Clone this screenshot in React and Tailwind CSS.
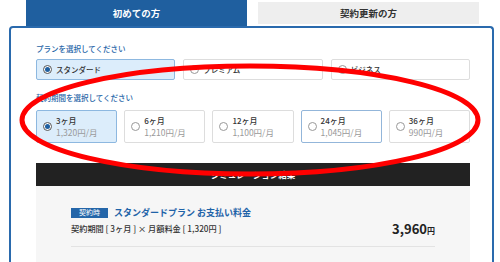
import React from "react";

function Radio({ checked }) {
  return (
    <span
      className={
        "flex h-[9px] w-[9px] shrink-0 items-center justify-center rounded-full border bg-white " +
        (checked ? "border-[#555]" : "border-[#999]")
      }
    >
      {checked && <span className="h-[5px] w-[5px] rounded-full bg-[#1f5fa0]" />}
    </span>
  );
}

const plans = [
  { name: "スタンダード", checked: true },
  { name: "プレミアム", checked: false },
  { name: "ビジネス", checked: false },
];

const periods = [
  { name: "3ヶ月", price: "1,320円/月", state: "checked" },
  { name: "6ヶ月", price: "1,210円/月", state: "" },
  { name: "12ヶ月", price: "1,100円/月", state: "" },
  { name: "24ヶ月", price: "1,045円/月", state: "hover" },
  { name: "36ヶ月", price: "990円/月", state: "" },
];

export default function App() {
  return (
    <div
      className="relative h-[262px] w-[500px] overflow-hidden bg-white text-[#333]"
      style={{ fontFamily: '"Noto Sans CJK JP", "Noto Sans", sans-serif' }}
    >
      {/* tabs */}
      <div className="flex h-[26px] pl-[26px]">
        <div className="flex h-[26px] w-[221px] items-center justify-center bg-[#1f5f9f] text-[9.5px] font-bold text-white">
          初めての方
        </div>
        <div className="ml-[11px] mt-[2px] flex h-[22px] w-[221px] items-center justify-center bg-[#eeeeee] text-[9.5px] font-bold text-[#333]">
          契約更新の方
        </div>
      </div>

      {/* panel */}
      <div className="ml-[9px] h-[300px] w-[485px] rounded-t-[4px] border-2 border-b-0 border-[#2a6aad] pt-[16px]">
        <div className="ml-[25px] w-[434px]">
          <div className="h-[10px] text-[7.5px] font-medium leading-[10px] text-[#2766a8]">
            プランを選択してください
          </div>
          <div className="mt-[5px] grid grid-cols-3 gap-[8px]">
            {plans.map((p) => (
              <div
                key={p.name}
                className={
                  "flex h-[21px] items-center gap-[4px] rounded-[2px] border pl-[6px] text-[7.5px] font-medium " +
                  (p.checked
                    ? "border-[#8db8e0] bg-[#dcedfb]"
                    : "border-[#dddddd] bg-white")
                }
              >
                <Radio checked={p.checked} />
                <span className="text-[#333]">{p.name}</span>
              </div>
            ))}
          </div>

          <div className="mt-[13px] h-[10px] text-[7.5px] font-medium leading-[10px] text-[#2766a8]">
            契約期間を選択してください
          </div>
          <div className="mt-[7px] grid grid-cols-5 gap-[7px]">
            {periods.map((p) => (
              <div
                key={p.name}
                className={
                  "flex h-[33px] items-center gap-[4px] rounded-[2px] border pl-[6px] " +
                  (p.state === "checked"
                    ? "border-[#8db8e0] bg-[#dcedfb]"
                    : p.state === "hover"
                    ? "border-[#93b6da] bg-white"
                    : "border-[#dddddd] bg-white")
                }
              >
                <Radio checked={p.state === "checked"} />
                <div className="flex flex-col">
                  <span className="text-[8px] font-medium leading-[10.5px] text-[#333]">
                    {p.name}
                  </span>
                  <span className="text-[8.5px] leading-[10.5px] text-[#999]">
                    {p.price}
                  </span>
                </div>
              </div>
            ))}
          </div>

          <div className="mt-[20px] flex h-[23px] items-center justify-center bg-[#222222] text-[8.5px] font-bold text-white">
            シミュレーション結果
          </div>
          <div className="h-[120px] bg-[#f6f6f6] px-[35px] pt-[21px]">
            <div className="flex h-[11px] items-center gap-[6px]">
              <span className="flex h-[10px] w-[37px] items-center justify-center bg-[#2466a9] text-[7px] text-white">
                契約時
              </span>
              <span className="text-[9px] font-bold text-[#1f63a8]">
                スタンダードプラン お支払い料金
              </span>
            </div>
            <div className="mt-[5px] flex h-[11px] items-center justify-between">
              <span className="text-[8.2px] font-medium text-[#333]">
                契約期間 [ 3ヶ月 ] × 月額料金 [ 1,320円 ]
              </span>
              <span className="flex items-baseline font-bold text-[#222]">
                <span className="text-[13px]">3,960</span>
                <span className="text-[8px]">円</span>
              </span>
            </div>
            <div className="mt-[12px] h-px bg-[#e3e3e3]" />
          </div>
        </div>
      </div>

      {/* red annotation ellipse */}
      <svg
        className="pointer-events-none absolute left-0 top-0"
        width="500"
        height="262"
        viewBox="0 0 500 262"
      >
        <ellipse
          cx="250"
          cy="120"
          rx="228"
          ry="54"
          fill="none"
          stroke="#f00"
          strokeWidth="5"
        />
      </svg>
    </div>
  );
}
